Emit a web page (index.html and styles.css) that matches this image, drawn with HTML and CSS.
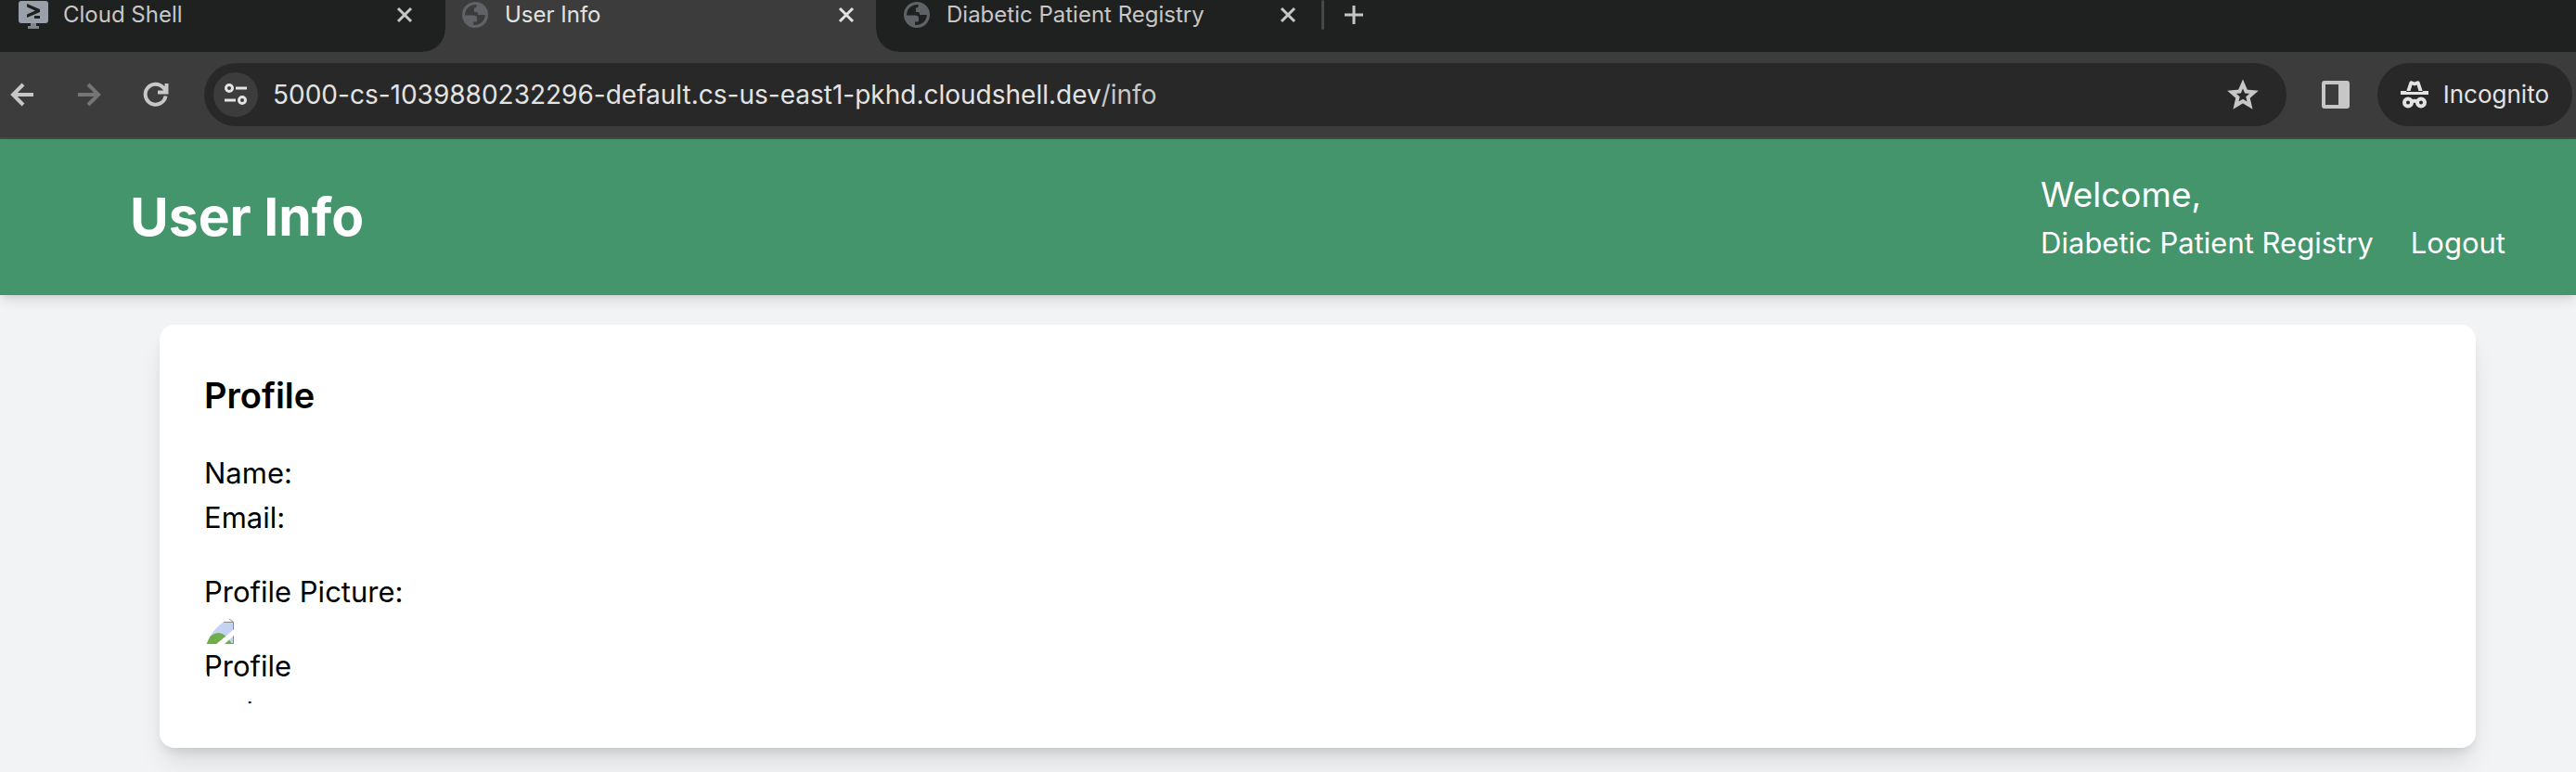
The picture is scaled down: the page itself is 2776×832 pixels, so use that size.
FILE: index.html
```html
<!DOCTYPE html>
<html lang="en">
<head>
<meta charset="utf-8">
<title>User Info</title>
<link rel="stylesheet" href="styles.css">
</head>
<body>
<div class="tabs">
  <div class="tab">
    <svg class="favicon" viewBox="0 0 32 32" aria-hidden="true"><rect y="1" width="32" height="24" rx="3" fill="#9aa0a9"/><path d="M13 25h6v3h3v3H10v-3h3z" fill="#80868b"/><path d="M9 4l14 6v3L9 19v-3.500l9-4L9 7.500z" fill="#1f2120"/><path d="M17 17h6v3h-6z" fill="#1f2120"/></svg>
    <span class="tab-title">Cloud Shell</span>
    <button class="close" aria-label="Close tab"><svg viewBox="0 0 16 16"><path d="M1 1l14 14M15 1L1 15"/></svg></button>
  </div>
  <div class="tab active">
    <svg class="favicon globe" viewBox="0 0 28 28" aria-hidden="true"><circle cx="14" cy="14" r="14" fill="#5f6368"/><path d="M3 14.500A11 11 0 0 1 16 3.200q0 2.800-3 3.300v4.500h2.500q1.500 0 1.500 3h7.800A11 11 0 0 1 12 24.800v-3.300h2.500q1.500 0 1.500-1.500v-2.500q0-3-4-3z" fill="#3c3c3c"/></svg>
    <span class="tab-title">User Info</span>
    <button class="close" aria-label="Close tab"><svg viewBox="0 0 16 16"><path d="M1 1l14 14M15 1L1 15"/></svg></button>
  </div>
  <div class="tab">
    <svg class="favicon globe" viewBox="0 0 28 28" aria-hidden="true"><circle cx="14" cy="14" r="14" fill="#5f6368"/><path d="M3 14.500A11 11 0 0 1 16 3.200q0 2.800-3 3.300v4.500h2.500q1.500 0 1.500 3h7.800A11 11 0 0 1 12 24.800v-3.300h2.500q1.500 0 1.500-1.500v-2.500q0-3-4-3z" fill="#1f2120"/></svg>
    <span class="tab-title">Diabetic Patient Registry</span>
    <button class="close" aria-label="Close tab"><svg viewBox="0 0 16 16"><path d="M1 1l14 14M15 1L1 15"/></svg></button>
  </div>
  <span class="tab-divider"></span>
  <button class="new-tab" aria-label="New tab"><svg viewBox="0 0 20 20"><path d="M10 0v20M0 10h20"/></svg></button>
</div>
<div class="toolbar">
  <div class="nav">
    <button aria-label="Back"><svg viewBox="0 0 26 26"><path d="M25 13H3M14 2L3 13l11 11"/></svg></button>
    <button aria-label="Forward" disabled><svg viewBox="0 0 26 26"><path d="M1 13h22M12 2l11 11-11 11"/></svg></button>
    <button aria-label="Reload"><svg viewBox="0 0 26 26"><path d="M23.500 14.500A11 11 0 1 1 21 5.500l3 3M24.500 1v9.500H15"/></svg></button>
  </div>
  <div class="omnibox">
    <button class="site" aria-label="View site information"><svg viewBox="0 0 24 24"><circle cx="5" cy="5" r="3.500"/><path d="M12 5h12M0 18h12"/><circle cx="19" cy="18" r="3.500"/></svg></button>
    <input class="url" aria-label="Address" value="5000-cs-1039880232296-default.cs-us-east1-pkhd.cloudshell.dev"><span class="path">/info</span>
    <button class="star" aria-label="Bookmark this tab"><svg viewBox="0 0 34 34"><path d="M17 5.500l3.500 8 8.500.8-6.500 5.700 2 8.500-7.500-4.500-7.500 4.500 2-8.500L5 14.300l8.500-.8z"/></svg></button>
  </div>
  <button class="panel" aria-label="Side panel"><svg viewBox="0 0 30 30"><rect width="30" height="30" rx="3" fill="#c7c7c7"/><path d="M4 4h14v22H4z"/></svg></button>
  <button class="incognito"><svg viewBox="0 0 30 30" aria-hidden="true"><path class="hat" fill-rule="evenodd" d="M0 11h30v4H0zM6 12l3.500-10.500q1-2 3-1l2.500 1 2.500-1q2-1 3 1L24 12zM10.500 11h9L17.500 4.500l-2.500 1-2.500-1z"/><circle cx="8" cy="23.500" r="4"/><circle cx="22" cy="23.500" r="4"/><path d="M11.500 22.500q3.500-1.500 7 0"/></svg>Incognito</button>
</div>
<header class="header">
  <h1>User Info</h1>
  <div class="account">
    <p class="welcome">Welcome,</p>
    <nav class="links"><a href="#">Diabetic Patient Registry</a><a href="#">Logout</a></nav>
  </div>
</header>
<main class="card">
  <h2>Profile</h2>
  <p>Name:</p>
  <p>Email:</p>
  <div class="picture">
    <p>Profile Picture:</p>
    <div class="avatar">
      <svg viewBox="0 0 32 32" aria-hidden="true"><path d="M2 8h30v24H2z" fill="#c4d3f2"/><path d="M2 32q3-11 13-12 8 0 15 12z" fill="#6fae4a"/><path d="M2 8.500h29.500V32M27 5l4.500 3.500M2 31.500h30" fill="none" stroke="#8b8b8b"/><path d="M33 15.500v6.500L21 33h-9z" fill="#fff"/></svg>
      <span>Profile Picture</span>
    </div>
  </div>
</main>
</body>
</html>
```
FILE: styles.css
```css
* { box-sizing: border-box; }
body {
  margin: 0;
  min-height: 100vh;
  background: #f2f3f5;
  color: #000;
  font: 31px/48px Inter, "Liberation Sans", sans-serif;
}
h1, h2, p { margin: 0; }
svg { display: block; overflow: visible; }
button {
  display: flex;
  align-items: center;
  justify-content: center;
  flex: none;
  padding: 0;
  border: 0;
  background: none;
  font: inherit;
  color: inherit;
}
button path, button circle { fill: none; stroke: #c7c7c7; stroke-width: 3; }

.tabs {
  display: flex;
  height: 56px;
  background: #1f2120;
  color: #c7c7c7;
  font-size: 24px;
  line-height: 32px;
}
.tab {
  display: flex;
  align-items: flex-start;
  width: 476px;
  height: 56px;
  padding: 0 24px 0 30px;
}
.tab:first-child { width: 480px; padding-left: 20px; padding-right: 36px; }
.tab.active {
  position: relative;
  width: 464px;
  padding-left: 18px;
  background: #3c3c3c;
  color: #e3e3e3;
}
.tab.active::before, .tab.active::after {
  content: "";
  position: absolute;
  bottom: 0;
  width: 24px;
  height: 24px;
}
.tab.active::before { right: 100%; background: radial-gradient(circle at 0 0, transparent 23px, #3c3c3c 24px); }
.tab.active::after { left: 100%; background: radial-gradient(circle at 100% 0, transparent 23px, #3c3c3c 24px); }
.favicon { flex: none; width: 32px; height: 32px; margin-right: 16px; }
.globe { width: 28px; margin-right: 18px; }
.tab-title { flex: 1; white-space: nowrap; }
.close { height: 32px; }
.close svg { width: 16px; height: 16px; }
.tab.active .close path { stroke: #e3e3e3; }
.tab-divider { width: 3px; height: 32px; margin-left: 4px; border-radius: 2px; background: #474747; }
.new-tab { height: 32px; margin-left: 22px; }
.new-tab svg { width: 20px; height: 20px; }

.toolbar {
  display: flex;
  align-items: center;
  height: 94px;
  padding: 12px 4px 12px 11px;
  border-bottom: 2px solid #474747;
  background: #3c3c3c;
  color: #e3e3e3;
}
.nav { display: flex; gap: 46px; margin-right: 39px; }
.nav svg { width: 26px; height: 26px; }
.nav button path { stroke-width: 4; }
.nav button:disabled path { stroke: #757575; }
.omnibox {
  display: flex;
  align-items: center;
  flex: 1;
  height: 68px;
  padding: 0 30px 0 10px;
  border-radius: 34px;
  background: #282828;
  font-size: 28px;
}
.site { width: 48px; height: 48px; margin-right: 16px; border-radius: 50%; background: #3c3c3c; }
.site svg { width: 24px; height: 24px; }
.site path, .site circle { stroke: #e3e3e3; }
.url {
  field-sizing: content;
  padding: 0;
  border: 0;
  outline: 0;
  background: none;
  font: inherit;
  color: inherit;
}
.path { color: #c7c7c7; }
.star { margin-left: auto; }
.star svg { width: 34px; height: 34px; }
.star path { stroke-width: 4; }
.panel { margin: 0 30px 0 38px; }
.panel svg { width: 30px; height: 30px; }
.panel path { fill: #3c3c3c; stroke: none; }
.incognito {
  gap: 16px;
  height: 68px;
  padding: 0 25px;
  border-radius: 34px;
  background: #282828;
  font-size: 26px;
}
.incognito svg { width: 30px; height: 30px; }
.incognito path, .incognito circle { stroke: #e3e3e3; stroke-width: 4; }
.incognito .hat { fill: #e3e3e3; stroke: none; }

.header {
  display: flex;
  align-items: center;
  justify-content: space-between;
  padding: 32px 76px 32px 140px;
  background: #44946c;
  color: #fff;
  box-shadow: 0 8px 12px -2px rgb(0 0 0 / .1), 0 4px 8px -4px rgb(0 0 0 / .1);
}
h1 { font-size: 57px; line-height: 72px; font-weight: 700; }
.welcome { font-size: 37px; line-height: 56px; }
.links { display: flex; gap: 40px; }
.links a { color: inherit; text-decoration: none; }

.card {
  margin: 32px 108px 26px 172px;
  padding: 48px;
  border-radius: 16px;
  background: #fff;
  box-shadow: 0 20px 30px -6px rgb(0 0 0 / .1), 0 8px 12px -4px rgb(0 0 0 / .1);
}
h2 { margin-bottom: 32px; font-size: 38px; line-height: 56px; font-weight: 600; }
.picture { margin-top: 32px; }
.avatar { width: 96px; height: 96px; overflow: hidden; border-radius: 50%; }
.avatar svg { width: 32px; height: 32px; }
```
